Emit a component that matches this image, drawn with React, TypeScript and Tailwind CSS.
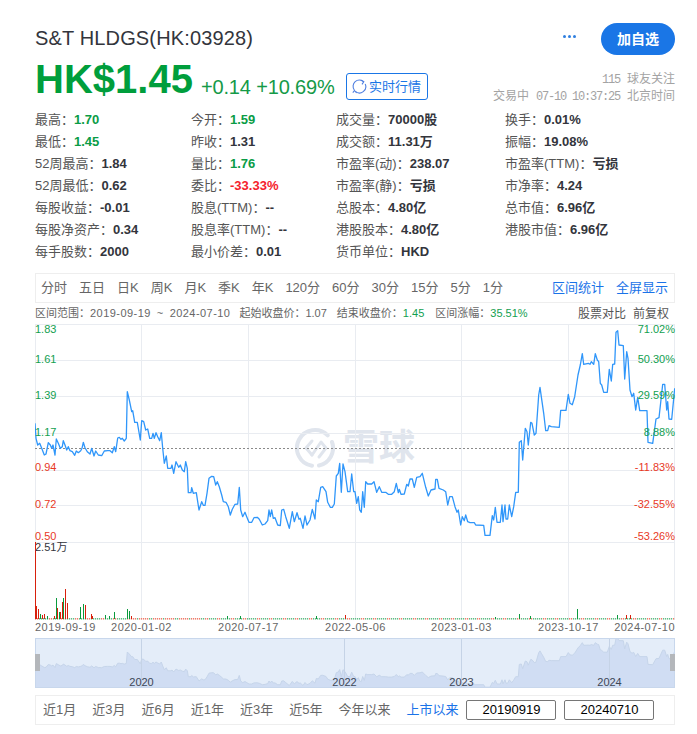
type Pt = [number, number];

// line traced from the chart, in page coordinates
const seg = (ox: number, oy: number, pts: Pt[]): Pt[] => pts.map(([x, y]) => [ox + x / 3, oy + y / 3]);

const line: Pt[] = [
  ...seg(35, 380, [[0,130],[3,175],[8,195],[14,190],[20,205],[28,225],[33,222],[40,188],[46,195],[50,205],[54,195],[60,225],[64,177],[70,190],[76,205],[82,200],[85,182],[90,195],[95,210],[100,200],[105,212],[112,215],[119,226],[124,213],[130,218],[137,212],[141,205],[145,187],[150,203],[157,215],[165,222],[170,205],[177,228],[182,213],[190,225],[200,227],[208,213],[218,212],[225,212],[232,218],[238,200],[242,215],[248,174],[253,172],[258,178],[262,175],[268,183],[274,175],[277,35],[283,60],[290,95],[293,92],[299,127],[307,127],[316,180],[320,122],[326,125],[332,150],[338,147],[344,175],[350,175],[354,160],[358,175],[363,158],[368,170],[374,182],[379,158],[383,205],[388,250],[394,228],[398,265],[408,265],[411,255],[416,280],[423,245],[431,262],[436,255],[442,270],[448,275],[452,245],[457,265],[460,338],[468,338],[470,323],[475,340],[484,338],[492,390],[500,365],[505,376],[510,376]]),
  ...seg(195, 450, [[36,130],[42,85],[50,79],[56,80],[62,105],[67,95],[73,110],[80,135],[85,155],[93,157],[100,170],[106,195],[112,178],[120,163],[128,162],[133,112],[137,180],[143,200],[150,187],[155,200],[162,217],[170,217],[177,203],[187,202],[193,208],[202,225],[210,222],[218,212],[222,180],[226,200],[230,180],[235,205],[240,203],[248,225],[256,227],[260,180],[266,178],[272,200],[283,235],[292,185],[298,215],[306,188],[312,208],[316,205],[324,235],[330,198],[336,225],[345,210],[352,178],[360,207],[364,150],[370,155],[377,112],[383,110],[393,125],[398,157],[406,172],[412,172],[418,162],[424,78],[430,70],[434,40],[439,127],[444,42],[450,65],[458,125],[465,125],[470,72],[476,125]]),
  ...seg(355, 450, [[0,125],[5,160],[10,140],[14,180],[19,187],[23,125],[28,172],[32,95],[38,102],[50,102],[57,95],[65,127],[73,110],[80,127],[92,127],[100,133],[110,133],[118,125],[124,100],[130,128],[133,118],[138,133],[148,132],[155,103],[160,108],[165,87],[172,87],[178,112],[185,82],[195,80],[202,70],[212,112],[220,138],[228,120],[240,117],[242,88],[247,88],[252,115],[265,120],[272,125],[278,165],[284,140],[292,140],[300,170],[306,187],[310,180],[317,225],[322,200],[328,212],[332,195],[338,215],[345,218],[358,218],[362,225],[386,226],[390,256],[405,256],[412,197],[416,210],[421,172],[426,217],[436,217],[441,165],[444,215],[450,165],[453,207],[458,207],[463,165],[470,200],[476,170],[482,127],[490,127]]),
  ...seg(510, 325, [[28,352],[34,347],[38,405],[46,310],[51,320],[55,360],[62,292],[66,295],[73,330],[78,325],[86,210],[90,187],[94,215],[101,265],[107,317],[113,317],[117,302],[124,305],[148,307],[152,256],[168,256],[175,208],[180,235],[187,239],[194,215],[204,150],[211,120],[217,86],[221,118],[235,115],[240,118],[244,110],[251,118],[256,86],[262,105],[266,110],[271,175],[275,180],[281,202],[292,202],[298,133],[304,168],[308,118],[314,117],[318,22],[323,17],[327,60],[340,62],[344,162],[350,80],[354,100],[360,195],[366,215],[371,205],[377,255],[383,217],[389,257],[411,257],[414,352],[428,355],[438,282],[447,278],[458,178],[464,178],[470,255],[473,230],[477,282],[485,283],[494,190]]),
];

const toPath = (pts: Pt[]) => pts.map(([x, y]) => `${x.toFixed(1)},${y.toFixed(1)}`).join(" ");

const miniPts: Pt[] = line.map(([x, y]) => [x, Math.max(638.5, 652 + (y - 391.7) * 0.245)]);

const RED = "#d8200c";
const GREEN = "#0a9a3c";

// [x, top y, colour]
const bars: [number, number, string][] = [
  [35.5, 542, RED], [36.5, 606, RED], [38.5, 609, RED], [40.5, 614, GREEN], [42.5, 615, RED], [44.5, 614, RED],
  [47.5, 616, GREEN], [54.5, 616, RED], [56.5, 598, GREEN], [57.5, 608, RED], [59.5, 612, GREEN], [60.5, 612, RED],
  [62.5, 602, RED], [63.5, 598, GREEN], [65.5, 589, RED], [67.5, 603, RED], [80.5, 607, GREEN], [83.5, 604, GREEN],
  [85.5, 605, RED], [91.5, 614, RED], [92.5, 616, RED], [105.5, 615, GREEN], [109.5, 616, GREEN], [114.5, 612, GREEN],
  [127.5, 609, GREEN], [129.5, 611, GREEN], [131.5, 616, RED], [227.5, 616, GREEN], [240.5, 616, GREEN], [316.5, 616, GREEN],
  [345.5, 615, RED], [495.5, 617, GREEN], [519.5, 614, GREEN], [530.5, 616, GREEN], [577.5, 609, GREEN], [617.5, 615, GREEN],
  [626.5, 615, RED], [630.5, 615, RED],
];

// the tiny bar every trading day makes at the foot of the volume pane
const ticks = Array.from({ length: 320 }, (_, i) => {
  const x = 35 + i * 2;
  const n = (i * 7919) % 13;
  const red = x > 130 && x < 205 ? n < 10 : n < 4;
  return { x, red };
});

type Tone = "green" | "red" | "dark";
type Stat = [string, string, Tone];

const stats: (Stat | null)[][] = [
  [["最高", "1.70", "green"], ["今开", "1.59", "green"], ["成交量", "70000股", "dark"], ["换手", "0.01%", "dark"]],
  [["最低", "1.45", "green"], ["昨收", "1.31", "dark"], ["成交额", "11.31万", "dark"], ["振幅", "19.08%", "dark"]],
  [["52周最高", "1.84", "dark"], ["量比", "1.76", "green"], ["市盈率(动)", "238.07", "dark"], ["市盈率(TTM)", "亏损", "dark"]],
  [["52周最低", "0.62", "dark"], ["委比", "-33.33%", "red"], ["市盈率(静)", "亏损", "dark"], ["市净率", "4.24", "dark"]],
  [["每股收益", "-0.01", "dark"], ["股息(TTM)", "--", "dark"], ["总股本", "4.80亿", "dark"], ["总市值", "6.96亿", "dark"]],
  [["每股净资产", "0.34", "dark"], ["股息率(TTM)", "--", "dark"], ["港股股本", "4.80亿", "dark"], ["港股市值", "6.96亿", "dark"]],
  [["每手股数", "2000", "dark"], ["最小价差", "0.01", "dark"], ["货币单位", "HKD", "dark"], null],
];

const toneClass: Record<Tone, string> = {
  green: "text-[#0a9c46]",
  red: "text-[#f5222d]",
  dark: "text-[#33353c]",
};

const periods = ["分时", "五日", "日K", "周K", "月K", "季K", "年K", "120分", "60分", "30分", "15分", "5分", "1分"];
const ranges = ["近1月", "近3月", "近6月", "近1年", "近3年", "近5年", "今年以来"];

const leftScale: [string, number, string][] = [
  ["1.83", 0, "text-[#12a050]"], ["1.61", 30, "text-[#12a050]"], ["1.39", 66, "text-[#12a050]"], ["1.17", 103, "text-[#12a050]"],
  ["0.94", 138, "text-[#e8391f]"], ["0.72", 175, "text-[#e8391f]"], ["0.50", 207, "text-[#e8391f]"],
];
const rightScale: [string, number, string][] = [
  ["71.02%", 0, "text-[#12a050]"], ["50.30%", 30, "text-[#12a050]"], ["29.59%", 66, "text-[#12a050]"], ["8.88%", 103, "text-[#12a050]"],
  ["-11.83%", 138, "text-[#e8391f]"], ["-32.55%", 175, "text-[#e8391f]"], ["-53.26%", 207, "text-[#e8391f]"],
];
const dates: [string, number][] = [["2020-01-02", 106.5], ["2020-07-17", 213.5], ["2022-05-06", 320.5], ["2023-01-03", 426.5], ["2023-10-17", 533.5]];
const years: [string, number][] = [["2020", 106.5], ["2022", 309.5], ["2023", 426.5], ["2024", 574.5]];

function Watermark() {
  return (
    <div className="absolute left-[260px] top-[103px] flex items-center gap-[8px] text-[#e0e5ed]">
      <svg width="40" height="42" viewBox="0 0 40 42" fill="none" stroke="currentColor" strokeWidth="4" strokeLinecap="round" strokeLinejoin="round">
        <path d="M32.7 8.3 A18 18 0 1 0 17 38.75" />
        <path d="M24 38.55 A18 18 0 0 0 37 15" />
        <path d="M17 14 L11 21 L17 28" strokeWidth="3" />
        <path d="M17 28 L26 15 L31 21 L24 30" strokeWidth="3" />
      </svg>
      <span className="text-[36px] leading-[36px] font-bold">雪球</span>
    </div>
  );
}

function Chart() {
  return (
    <div className="relative h-[314px] w-[640px]">
      <Watermark />
      <svg className="absolute inset-0" width="640" height="296" viewBox="35 324 640 296">
        <g stroke="#e9ecf1" strokeWidth="1">
          {[324.5, 360.5, 396.5, 433.5, 470.5, 505.5, 542.5].map((y) => (
            <line key={y} x1="35" x2="675" y1={y} y2={y} />
          ))}
          {[35.5, 141.5, 248.5, 355.5, 461.5, 568.5, 674.5].map((x) => (
            <line key={x} x1={x} x2={x} y1="324" y2="620" />
          ))}
        </g>
        <line x1="35" x2="675" y1="448.5" y2="448.5" stroke="#8a8a8a" strokeDasharray="2 2" />
        <polyline points={toPath(line)} fill="none" stroke="#2f96fa" strokeWidth="1.3" strokeLinejoin="round" />
        {ticks.map((t) => (
          <rect key={t.x} x={t.x} y="618" width="1.2" height="1.6" fill={t.red ? "#ee7d6c" : "#62bd86"} />
        ))}
        {bars.map(([x, y, c]) => (
          <line key={x} x1={x} x2={x} y1={y} y2="619" stroke={c} strokeWidth="1" />
        ))}
      </svg>
      {leftScale.map(([t, top, c]) => (
        <span key={t} className={`absolute left-0 text-[11px] leading-[11px] ${c}`} style={{ top }}>{t}</span>
      ))}
      {rightScale.map(([t, top, c]) => (
        <span key={t} className={`absolute right-0 text-[11px] leading-[11px] ${c}`} style={{ top }}>{t}</span>
      ))}
      <span className="absolute left-0 top-[218px] text-[11px] leading-[11px] text-[#33353c]">2.51万</span>
      <span className="absolute left-0 top-[297px] text-[11px] leading-[12px] tracking-[0.45px] text-[#666]">2019-09-19</span>
      {dates.map(([t, x]) => (
        <span key={t} className="absolute top-[297px] -translate-x-1/2 text-[11px] leading-[12px] tracking-[0.45px] text-[#666]" style={{ left: x }}>{t}</span>
      ))}
      <span className="absolute right-0 top-[297px] text-[11px] leading-[12px] tracking-[0.45px] text-[#666]">2024-07-10</span>
    </div>
  );
}

function Navigator() {
  return (
    <div className="relative h-[50px] w-[640px] bg-[#e4edf9]">
      <svg className="absolute inset-0" width="640" height="50" viewBox="35 638 640 50">
        <polygon points={`35,688 ${toPath(miniPts)} 675,688`} fill="#d0ddf3" stroke="#c6d5ea" strokeWidth="1" />
        {[141.5, 344.5, 461.5, 609.5].map((x) => (
          <line key={x} x1={x} x2={x} y1="638" y2="688" stroke="#c5d3e6" />
        ))}
        <rect x="35.5" y="638.5" width="639" height="49" fill="none" stroke="#c8d7ec" />
        <rect x="35" y="654" width="5" height="17" fill="#b4b7bb" />
        <rect x="670" y="654" width="5" height="17" fill="#b4b7bb" />
      </svg>
      {years.map(([t, x]) => (
        <span key={t} className="absolute top-[38px] -translate-x-1/2 text-[11px] leading-[12px] text-[#3d4757]" style={{ left: x }}>{t}</span>
      ))}
    </div>
  );
}

export default function App() {
  return (
    <div className="h-[734px] w-[697px] overflow-hidden bg-white pl-[35px] pr-[22px] pt-[23px] [font-family:'Liberation_Sans','Noto_Sans_CJK_SC',sans-serif]">
      <div className="flex h-[32px] items-center justify-between">
        <h1 className="mb-[3px] text-[20px] font-normal tracking-[0.15px] text-[#33353c]">S&amp;T HLDGS(HK:03928)</h1>
        <div className="flex items-center gap-[25px]">
          <div className="mb-[6px] flex gap-[2px]">
            <span className="h-[3px] w-[3px] rounded-full bg-[#2f7fe0]" />
            <span className="h-[3px] w-[3px] rounded-full bg-[#2f7fe0]" />
            <span className="h-[3px] w-[3px] rounded-full bg-[#2f7fe0]" />
          </div>
          <button className="h-[32px] w-[74px] rounded-full bg-[#1a76e6] text-[14px] font-bold text-white">加自选</button>
        </div>
      </div>

      <div className="mt-[1px] flex h-[46px] items-end justify-between">
        <div className="flex items-end">
          <span className="text-[40px] leading-[46px] font-bold text-[#009e3c]">HK$1.45</span>
          <span className="mb-[3px] ml-[8px] text-[20px] leading-[24px] tracking-[-0.15px] text-[#159a48]">+0.14 +10.69%</span>
          <span className="mb-[2px] ml-[11px] flex h-[27px] w-[82px] items-center justify-center gap-[2px] rounded-[3px] border border-[#1a76e6] text-[13px] text-[#1a76e6]">
            <svg width="15" height="15" viewBox="0 0 15 15" fill="none" stroke="#4f7fe0" strokeWidth="1.1">
              <path d="M11.6 2.6 A6.3 6.3 0 0 0 2.3 11" />
              <path d="M3.4 12.4 A6.3 6.3 0 0 0 13.2 5" />
              <path d="M8.6 1 L11.8 2.7 L10 5.4" />
              <path d="M4.6 14 L2.5 11.5 L.8 13.6" />
            </svg>
            实时行情
          </span>
        </div>
        <div className="mb-[-3px] text-right text-[12px] leading-[16px] text-[#a3a3a3]">
          <div>
            <span className="mr-[7px] tracking-[-1.2px] [font-family:'Liberation_Mono',monospace]">115</span>球友关注
          </div>
          <div>
            交易中<span className="mx-[7px] tracking-[-1.2px] [font-family:'Liberation_Mono',monospace]">07-10 10:37:25</span>北京时间
          </div>
        </div>
      </div>

      <div className="mt-[7px] grid grid-cols-[156px_145px_169px_1fr] text-[13px] leading-[22px]">
        {stats.flat().map((s, i) =>
          s ? (
            <div key={i} className="whitespace-nowrap">
              <span className="text-[#555]">{s[0]}：</span>
              <span className={`font-bold ${toneClass[s[2]]}`}>{s[1]}</span>
            </div>
          ) : (
            <div key={i} />
          )
        )}
      </div>

      <div className="mt-[10px] flex h-[30px] items-center justify-between border border-[#eeeeee] pl-[5px] pr-[6px] text-[13px] text-[#666]">
        <div className="flex gap-[12px]">
          {periods.map((p) => (
            <span key={p}>{p}</span>
          ))}
        </div>
        <div className="flex gap-[12px] text-[#1a73e8]">
          <span>区间统计</span>
          <span>全屏显示</span>
        </div>
      </div>

      <div className="flex h-[21px] items-center justify-between text-[11px] text-[#666]">
        <div className="whitespace-pre">
          区间范围：<span className="tracking-[0.45px]">2019-09-19 <span className="mx-[2.5px]">~</span> 2024-07-10</span>
          <span className="ml-[9px]">起始收盘价：1.07</span>
          <span className="ml-[10px]">结束收盘价：<span className="text-[#12a050]">1.45</span></span>
          <span className="ml-[11px]">区间涨幅：<span className="text-[#12a050]">35.51%</span></span>
        </div>
        <div className="flex gap-[7px] pr-[6px] text-[12px] text-[#555]">
          <span>股票对比</span>
          <span>前复权</span>
        </div>
      </div>

      <Chart />
      <Navigator />

      <div className="mt-[7px] flex h-[30px] items-center border border-[#eeeeee] pl-[7px] text-[13px] text-[#666]">
        <div className="flex gap-[16px]">
          {ranges.map((r) => (
            <span key={r}>{r}</span>
          ))}
          <span className="text-[#1a73e8]">上市以来</span>
        </div>
        <div className="ml-[8px] flex gap-[8px]">
          <span className="flex h-[20px] w-[90px] items-center justify-center rounded-[2px] border border-[#767676] text-[13px] text-black">20190919</span>
          <span className="flex h-[20px] w-[90px] items-center justify-center rounded-[2px] border border-[#767676] text-[13px] text-black">20240710</span>
        </div>
      </div>
    </div>
  );
}
